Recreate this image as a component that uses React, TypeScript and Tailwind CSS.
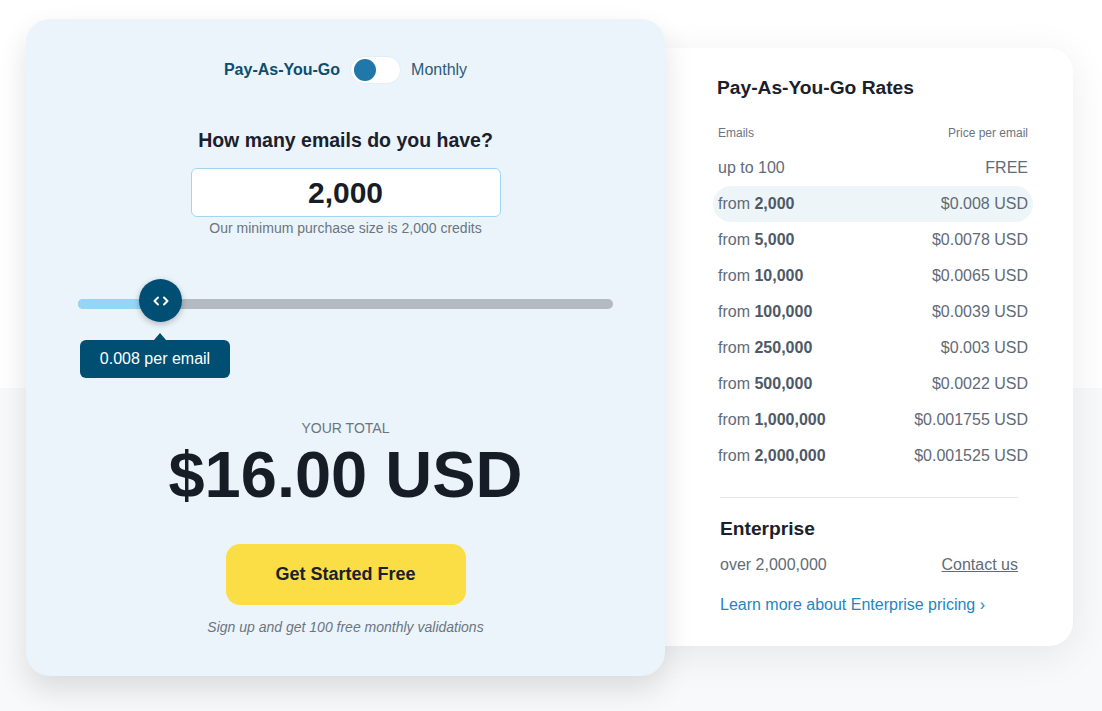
import React from "react";

const rows: { from: string; bold?: string; price: string; active?: boolean }[] = [
  { from: "up to 100", price: "FREE" },
  { from: "from ", bold: "2,000", price: "$0.008 USD", active: true },
  { from: "from ", bold: "5,000", price: "$0.0078 USD" },
  { from: "from ", bold: "10,000", price: "$0.0065 USD" },
  { from: "from ", bold: "100,000", price: "$0.0039 USD" },
  { from: "from ", bold: "250,000", price: "$0.003 USD" },
  { from: "from ", bold: "500,000", price: "$0.0022 USD" },
  { from: "from ", bold: "1,000,000", price: "$0.001755 USD" },
  { from: "from ", bold: "2,000,000", price: "$0.001525 USD" },
];

export default function App() {
  return (
    <div
      className="w-[1102px] h-[711px] overflow-hidden bg-[linear-gradient(to_bottom,#ffffff_388px,#f8f9fb_388px)] pl-[26px] pt-[19px] flex items-start"
      style={{ fontFamily: '"Liberation Sans", Arial, sans-serif' }}
    >
      {/* Left card */}
      <div className="relative z-10 w-[639px] h-[657px] shrink-0 rounded-[24px] bg-[#ebf4fa] shadow-[0_14px_30px_rgba(0,0,0,0.12)] flex flex-col items-center pt-[36px]">
        <div className="flex items-center h-[29px]">
          <span className="text-[16px] font-bold text-[#0d4d6e]">Pay-As-You-Go</span>
          <div className="ml-[10px] w-[51px] h-[28px] rounded-full bg-white border border-[#e2eef6] flex items-center pl-[3px]">
            <div className="w-[22px] h-[22px] rounded-full bg-[#1f78a9]" />
          </div>
          <span className="ml-[10px] text-[16px] text-[#2c5c78]">Monthly</span>
        </div>

        <div className="mt-[44px] h-[24px] leading-[24px] text-[19.5px] font-bold text-[#1a202c]">
          How many emails do you have?
        </div>

        <div className="mt-[16px] w-[310px] h-[49px] rounded-[6px] bg-white border border-[#9fd6f4] flex items-center justify-center text-[30px] font-bold text-[#161d26]">
          2,000
        </div>
        <div className="mt-[3px] h-[16px] leading-[16px] text-[14px] text-[#6b7480]">
          Our minimum purchase size is 2,000 credits
        </div>

        {/* Slider */}
        <div className="mt-[43px] self-stretch px-[52px]">
          <div className="relative h-[99px]">
            <div className="absolute left-0 right-0 top-[20px] h-[10px] rounded-full bg-[#b3bac2]" />
            <div className="absolute left-0 w-[82px] top-[20px] h-[10px] rounded-l-full bg-[#95d6f7]" />
            <div className="absolute left-[61px] top-0 w-[43px] h-[43px] rounded-full bg-[#004e73] shadow-[0_2px_6px_rgba(0,0,0,0.25)] flex items-center justify-center">
              <svg width="18" height="10" viewBox="0 0 18 10" fill="none" stroke="white" strokeWidth="2" strokeLinecap="round" strokeLinejoin="round">
                <path d="M6 1.5 L2.5 5 L6 8.5" />
                <path d="M12 1.5 L15.5 5 L12 8.5" />
              </svg>
            </div>
            <div className="absolute left-[2px] top-[61px] w-[150px] h-[38px] rounded-[6px] bg-[#004e72] flex items-center justify-center text-[16px] text-white">
              0.008 per email
              <div className="absolute left-[74px] top-[-7px] w-0 h-0 border-l-[6px] border-r-[6px] border-b-[7px] border-l-transparent border-r-transparent border-b-[#004e72]" />
            </div>
          </div>
        </div>

        <div className="mt-[42px] h-[16px] leading-[16px] text-[14px] text-[#6b7480] uppercase">
          Your Total
        </div>
        <div className="mt-[7px] h-[64px] leading-[64px] text-[65px] font-bold text-[#161d26]">
          $16.00 USD
        </div>

        <button className="mt-[37px] w-[240px] h-[61px] rounded-[14px] bg-[#fbdd45] text-[18px] font-bold text-[#1a202c]">
          Get Started Free
        </button>
        <div className="mt-[14px] h-[16px] leading-[16px] text-[14px] italic text-[#6b7480]">
          Sign up and get 100 free monthly validations
        </div>
      </div>

      {/* Right card */}
      <div className="relative z-0 mt-[29px] ml-[-24px] w-[432px] h-[598px] shrink-0 rounded-[24px] bg-white shadow-[0_8px_40px_rgba(0,0,0,0.08)] pl-[72px] pr-[40px] pt-[28px]">
        <div className="ml-[4px] h-[24px] leading-[24px] text-[19.2px] font-bold text-[#1a202c]">
          Pay-As-You-Go Rates
        </div>
        <div className="mt-[25px] px-[5px] h-[16px] flex items-center justify-between text-[12px] text-[#6b7480]">
          <span>Emails</span>
          <span>Price per email</span>
        </div>
        <div className="mt-[9px] flex flex-col">
          {rows.map((r, i) => (
            <div
              key={i}
              className={
                "h-[36px] px-[5px] flex items-center justify-between text-[16px] text-[#5f6b78] " +
                (r.active ? "bg-[#eef5f9] rounded-full" : "")
              }
            >
              <span>
                {r.from}
                {r.bold && <b className="font-bold text-[#4d5966]">{r.bold}</b>}
              </span>
              <span>{r.price}</span>
            </div>
          ))}
        </div>
        <div className="ml-[7px] w-[298px]">
          <div className="mt-[23px] h-px bg-[#e5e7eb]" />
          <div className="mt-[19px] h-[24px] leading-[24px] text-[19.2px] font-bold text-[#1a202c]">
            Enterprise
          </div>
          <div className="mt-[12px] h-[24px] flex items-center justify-between text-[16px] text-[#5f6b78]">
            <span>over 2,000,000</span>
            <a className="underline">Contact us</a>
          </div>
          <div className="mt-[16px] h-[24px] leading-[24px] text-[16px] text-[#1d87bf]">
            Learn more about Enterprise pricing ›
          </div>
        </div>
      </div>
    </div>
  );
}
